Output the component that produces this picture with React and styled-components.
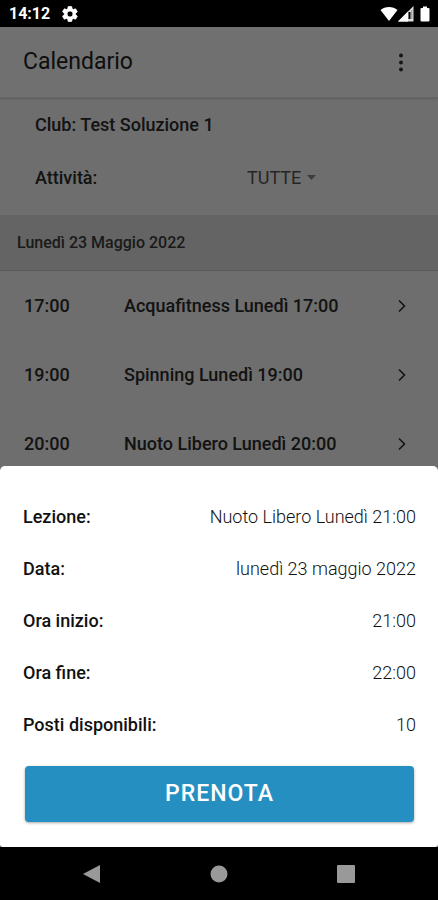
import React from "react";
import styled, { createGlobalStyle } from "styled-components";

const GlobalStyle = createGlobalStyle`
  *, *::before, *::after { box-sizing: border-box; }
  body {
    margin: 0;
    background: #000;
    font-family: Roboto, "Noto Sans", sans-serif;
    font-size: 18px;
    line-height: 24px;
    color: #2c2c2c;
  }
  button, select { font: inherit; color: inherit; }
`;

const Phone = styled.div`
  display: flex;
  flex-direction: column;
  min-height: 100vh;
`;

const StatusBar = styled.div`
  display: flex;
  align-items: center;
  justify-content: space-between;
  height: 27px;
  padding: 1px 8px 0 9px;
  background: #000;
  color: #fff;
`;

const Clock = styled.span`
  font-size: 16px;
  font-weight: 700;
`;

const StatusGroup = styled.div`
  display: flex;
  align-items: center;
  gap: ${(p) => p.$gap}px;
`;

const Screen = styled.div`
  position: relative;
  display: flex;
  flex: 1;
  flex-direction: column;
`;

const Page = styled.main`
  flex: 1;
  background: #fafafa;
`;

const Toolbar = styled.header`
  display: flex;
  align-items: center;
  justify-content: space-between;
  height: 71px;
  padding: 0 24px 0 23px;
  background: #fff;
  border-bottom: 1px solid #e6e6e6;
  box-shadow: 0 1px 2px rgba(0, 0, 0, 0.16);
`;

const Title = styled.h1`
  margin: 0;
  color: #222;
  font-size: 23px;
  line-height: 28px;
  font-weight: 400;
`;

const IconButton = styled.button`
  display: flex;
  padding: 0;
  border: 0;
  background: none;
`;

const Filters = styled.section`
  padding: 0 35px 11px;
`;

const FilterRow = styled.div`
  display: grid;
  grid-template-columns: 212px 1fr;
  align-items: center;
  height: 53px;
`;

const ClubName = styled.h2`
  grid-column: 1 / -1;
  margin: 0;
  font-size: 18px;
  font-weight: 500;
`;

const FilterLabel = styled.label`
  font-weight: 500;
`;

const SelectWrap = styled.div`
  display: flex;
  align-items: center;
  gap: 6px;
`;

const Select = styled.select`
  appearance: none;
  field-sizing: content;
  padding: 0;
  border: 0;
  background: none;
  color: #555;
`;

const DateHeading = styled.h3`
  display: flex;
  align-items: center;
  height: 56px;
  margin: 0;
  padding: 0 17px;
  border-bottom: 1px solid #ccc;
  background: #e4e4e4;
  color: #3c3c3c;
  font-size: 16px;
  font-weight: 500;
`;

const LessonList = styled.ul`
  margin: 0;
  padding: 0;
  list-style: none;
`;

const LessonButton = styled.button`
  display: grid;
  grid-template-columns: 100px 1fr 16px;
  align-items: center;
  width: 100%;
  height: 69px;
  padding: 0 28px 0 24px;
  border: 0;
  background: none;
  text-align: left;
  font-weight: 500;
`;

const Backdrop = styled.div`
  position: absolute;
  inset: 0;
  background: rgba(0, 0, 0, 0.56);
`;

const Sheet = styled.section`
  position: absolute;
  right: 0;
  bottom: 0;
  left: 0;
  padding: 25px 22px 25px 23px;
  border-radius: 5px 5px 3px 3px;
  background: #fff;
`;

const Details = styled.dl`
  margin: 0 0 15px;
`;

const DetailRow = styled.div`
  display: flex;
  align-items: center;
  justify-content: space-between;
  height: 52px;
`;

const DetailLabel = styled.dt`
  color: #111;
  font-weight: 500;
`;

const DetailValue = styled.dd`
  margin: 0;
  color: #111;
  font-weight: 300;
`;

const BookButton = styled.button`
  display: block;
  width: calc(100% - 4px);
  height: 56px;
  margin: 0 2px;
  border: 0;
  border-radius: 4px;
  background: #258fc1;
  box-shadow: 0 1px 3px rgba(0, 0, 0, 0.35);
  color: #fff;
  font-size: 23px;
  font-weight: 500;
  letter-spacing: 1px;
`;

const NavBar = styled.nav`
  display: flex;
  align-items: center;
  justify-content: space-around;
  height: 53px;
  padding: 0 28px;
  background: #000;
`;

const lessons = [
  ["17:00", "Acquafitness Lunedì 17:00"],
  ["19:00", "Spinning Lunedì 19:00"],
  ["20:00", "Nuoto Libero Lunedì 20:00"],
];

const details = [
  ["Lezione:", "Nuoto Libero Lunedì 21:00"],
  ["Data:", "lunedì 23 maggio 2022"],
  ["Ora inizio:", "21:00"],
  ["Ora fine:", "22:00"],
  ["Posti disponibili:", "10"],
];

const GearIcon = () => (
  <svg width="18" height="18" viewBox="0 0 24 24" fill="#fff" stroke="#fff" strokeWidth="1" aria-hidden="true">
    <path d="M19.4 13a7.8 7.8 0 0 0 0-2l2.1-1.6a.5.5 0 0 0 .1-.7l-2-3.4a.5.5 0 0 0-.6-.2l-2.5 1a7.3 7.3 0 0 0-1.7-1l-.4-2.6a.5.5 0 0 0-.5-.5h-4a.5.5 0 0 0-.5.5L9 5.1a7.3 7.3 0 0 0-1.7 1l-2.5-1a.5.5 0 0 0-.6.2l-2 3.4a.5.5 0 0 0 .1.7L4.500 11a7.800 7.800 0 0 0 0 2l-2.200 1.600a.5.5 0 0 0-.1.7l2 3.400c.1.2.4.3.6.2l2.500-1a7.300 7.300 0 0 0 1.700 1l.4 2.600c0 .3.2.5.5.5h4c.3 0 .5-.2.5-.5l.4-2.600a7.300 7.300 0 0 0 1.700-1l2.500 1c.2.1.5 0 .6-.2l2-3.400a.5.5 0 0 0-.1-.7ZM12 16a4 4 0 1 1 0-8 4 4 0 0 1 0 8Z" />
  </svg>
);

const WifiIcon = () => (
  <svg width="18" height="16" viewBox="0 0 18 16" aria-hidden="true">
    <path d="M0.500 4C5 0 13 0 17.500 4L9 15Z" fill="#fff" />
  </svg>
);

const SignalIcon = () => (
  <svg width="16" height="16" viewBox="0 0 16 16" aria-hidden="true">
    <path d="M0 15.500 15.500 0V15.500Z" fill="#ddd" />
    <path d="M0 15.500 10 5.500V15.500Z" fill="#fff" />
    <path d="M11.500 6v7" stroke="#000" strokeWidth="2" />
    <path d="M13.800 4v9" stroke="#888" strokeWidth="1" />
  </svg>
);

const BatteryIcon = () => (
  <svg width="10" height="16" viewBox="0 0 10 16" aria-hidden="true">
    <path d="M3 .5h4v1.500h1.500q1 0 1 1v11.500q0 1-1 1h-7q-1 0-1-1V3q0-1 1-1H3Z" fill="#fff" />
  </svg>
);

const MoreIcon = () => (
  <svg width="26" height="26" viewBox="0 0 26 26" fill="#333" aria-hidden="true">
    <circle cx="13" cy="6.500" r="2" />
    <circle cx="13" cy="13.500" r="2" />
    <circle cx="13" cy="20.500" r="2" />
  </svg>
);

const Chevron = () => (
  <svg width="16" height="16" viewBox="0 0 16 16" fill="none" stroke="#2c2c2c" strokeWidth="1.600" aria-hidden="true">
    <path d="M5 2.500 10.500 8 5 13.500" />
  </svg>
);

export default function App() {
  return (
    <>
      <GlobalStyle />
      <Phone>
        <StatusBar>
          <StatusGroup $gap={11}>
            <Clock>14:12</Clock>
            <GearIcon />
          </StatusGroup>
          <StatusGroup $gap={6}>
            <StatusGroup $gap={0}>
              <WifiIcon />
              <SignalIcon />
            </StatusGroup>
            <BatteryIcon />
          </StatusGroup>
        </StatusBar>

        <Screen>
          <Page>
            <Toolbar>
              <Title>Calendario</Title>
              <IconButton type="button" aria-label="Menu">
                <MoreIcon />
              </IconButton>
            </Toolbar>
            <Filters>
              <FilterRow>
                <ClubName>Club: Test Soluzione 1</ClubName>
              </FilterRow>
              <FilterRow>
                <FilterLabel htmlFor="activity">Attività:</FilterLabel>
                <SelectWrap>
                  <Select id="activity" defaultValue="TUTTE">
                    <option>TUTTE</option>
                  </Select>
                  <svg width="9" height="5" viewBox="0 0 9 5" aria-hidden="true">
                    <path d="M0 0h9L4.500 5Z" fill="#888" />
                  </svg>
                </SelectWrap>
              </FilterRow>
            </Filters>
            <DateHeading>Lunedì 23 Maggio 2022</DateHeading>
            <LessonList>
              {lessons.map(([time, name]) => (
                <li key={time}>
                  <LessonButton type="button">
                    <span>{time}</span>
                    <span>{name}</span>
                    <Chevron />
                  </LessonButton>
                </li>
              ))}
            </LessonList>
          </Page>
          <Backdrop />
          <Sheet role="dialog" aria-label="Lezione">
            <Details>
              {details.map(([label, value]) => (
                <DetailRow key={label}>
                  <DetailLabel>{label}</DetailLabel>
                  <DetailValue>{value}</DetailValue>
                </DetailRow>
              ))}
            </Details>
            <BookButton type="button">PRENOTA</BookButton>
          </Sheet>
        </Screen>

        <NavBar>
          <IconButton type="button" aria-label="Indietro">
            <svg width="18" height="20" viewBox="0 0 18 20" fill="#999">
              <path d="M0 10 17 1v18Z" />
            </svg>
          </IconButton>
          <IconButton type="button" aria-label="Home">
            <svg width="18" height="18" viewBox="0 0 18 18" fill="#999">
              <circle cx="9" cy="9" r="8.500" />
            </svg>
          </IconButton>
          <IconButton type="button" aria-label="Recenti">
            <svg width="18" height="18" viewBox="0 0 18 18" fill="#999">
              <rect width="18" height="18" rx="1" />
            </svg>
          </IconButton>
        </NavBar>
      </Phone>
    </>
  );
}
